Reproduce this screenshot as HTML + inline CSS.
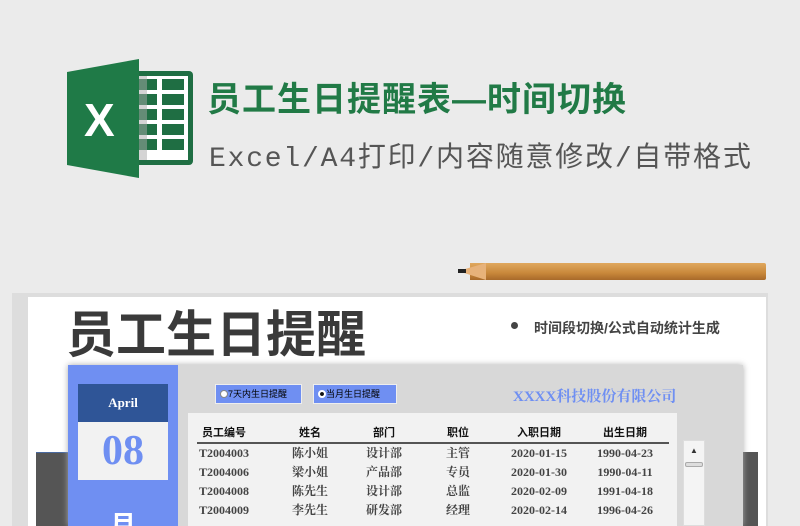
<!DOCTYPE html><html><head><meta charset="utf-8"><style>
*{margin:0;padding:0;box-sizing:border-box}
html,body{width:800px;height:526px;overflow:hidden}
body{background:#ebebeb;position:relative;font-family:"Liberation Sans","Noto Sans CJK SC",sans-serif}
.a{position:absolute}
.r{position:absolute;left:0;width:800px;height:19px}
.r span{position:absolute;width:90px;text-align:center;white-space:nowrap}
.d{font-size:12px;color:#444;font-family:"Liberation Serif","Noto Serif CJK SC",serif;font-weight:bold;line-height:19px}
.h{font-size:11px;color:#111;font-weight:bold;line-height:19px}
.c1{left:179px}.c2{left:265px}.c3{left:339px}.c4{left:413px}.c5{left:494px}.c6{left:580px}
</style></head><body>
<svg class="a" style="left:60px;top:55px" width="140" height="130" viewBox="60 55 140 130">
<rect x="130" y="71" width="63" height="94" rx="4" fill="#1f6e43"/>
<rect x="135" y="76" width="53" height="84" fill="#fff"/>
<g fill="#1f6e43"><rect x="139" y="79" width="18" height="11"/><rect x="162" y="79" width="22" height="11"/><rect x="139" y="94" width="18" height="11"/><rect x="162" y="94" width="22" height="11"/><rect x="139" y="109" width="18" height="11"/><rect x="162" y="109" width="22" height="11"/><rect x="139" y="124" width="18" height="11"/><rect x="162" y="124" width="22" height="11"/><rect x="139" y="139" width="18" height="11"/><rect x="162" y="139" width="22" height="11"/></g>
<rect x="139" y="76" width="8" height="84" fill="#aaa" opacity=".5"/>
<polygon points="67,72 139,59 139,178 67,165" fill="#1f7a47"/>
<text x="84" y="136" font-family="Liberation Sans" font-weight="bold" font-size="46" fill="#fff">X</text>
</svg>
<div class="a" style="left:207px;top:72px;font-size:34px;font-weight:bold;color:#217a46;letter-spacing:1px">员工生日提醒表—时间切换</div>
<div class="a" style="left:209px;top:135px;font-size:28px;color:#555;letter-spacing:1.8px;font-family:'Liberation Mono','Noto Sans CJK SC',monospace">Excel/A4打印/内容随意修改/自带格式</div>
<div class="a" style="left:470px;top:263px;width:296px;height:17px;background:linear-gradient(#e0a85e,#c8873a 60%,#a86a2a);border-radius:0 2px 2px 0"></div>
<div class="a" style="left:458px;top:263px;width:0;height:0;border-top:8px solid transparent;border-bottom:9px solid transparent;border-right:28px solid #e7b27a"></div>
<div class="a" style="left:458px;top:269px;width:8px;height:4px;background:#222"></div>
<div class="a" style="left:12px;top:293px;width:756px;height:233px;background:#ddd"></div>
<div class="a" style="left:28px;top:297px;width:738px;height:229px;background:#fff"></div>
<div class="a" style="left:66px;top:295px;font-size:50px;font-weight:bold;color:#3a3a3a">员工生日提醒</div>
<div class="a" style="left:511px;top:322px;width:7px;height:7px;border-radius:50%;background:#444"></div>
<div class="a" style="left:534px;top:318px;font-size:14px;font-weight:bold;color:#444">时间段切换/公式自动统计生成</div>
<div class="a" style="left:36px;top:452px;width:34px;height:74px;background:#555;border-top:1px solid #4a6aa0"></div>
<div class="a" style="left:740px;top:452px;width:18px;height:74px;background:#555"></div>
<div class="a" style="left:68px;top:365px;width:675px;height:161px;background:#d8d8d8;box-shadow:0 0 6px #aaa"></div>
<div class="a" style="left:68px;top:365px;width:110px;height:161px;background:#6f8ff2;overflow:hidden"><div style="position:absolute;left:42px;top:140px;color:#fff;font-size:26px;font-weight:bold">月</div></div>
<div class="a" style="left:78px;top:384px;width:90px;height:38px;background:#2f5597;color:#fff;font:bold 13px 'Liberation Serif',serif;text-align:center;line-height:38px">April</div>
<div class="a" style="left:78px;top:422px;width:90px;height:58px;background:#f2f2f2;color:#6f8ff2;font:bold 42px 'Liberation Serif',serif;text-align:center;line-height:58px">08</div>
<div class="a" style="left:215px;top:384px;width:87px;height:20px;background:#6f8ff2;border:1px solid #eee;font-size:9px;line-height:18px;padding-left:4px"><span style="display:inline-block;width:8px;height:8px;border-radius:50%;background:#fff;border:1px solid #888;vertical-align:-1px"></span>7天内生日提醒</div>
<div class="a" style="left:313px;top:384px;width:84px;height:20px;background:#6f8ff2;border:1px solid #eee;font-size:9px;line-height:18px;padding-left:4px"><span style="display:inline-block;width:8px;height:8px;border-radius:50%;background:#fff;border:2px solid #fff;box-shadow:inset 0 0 0 3px #111;vertical-align:-1px"></span>当月生日提醒</div>
<div class="a" style="left:513px;top:385px;font:bold 15px 'Liberation Serif','Noto Serif CJK SC',serif;color:#6f8ff2">XXXX科技股份有限公司</div>
<div class="a" style="left:188px;top:413px;width:489px;height:113px;background:#f2f2f2"></div>
<div class="r h" style="top:424px"><span class="c1">员工编号</span><span class="c2">姓名</span><span class="c3">部门</span><span class="c4">职位</span><span class="c5">入职日期</span><span class="c6">出生日期</span></div>
<div class="a" style="left:197px;top:442px;width:472px;height:2px;background:#555"></div>
<div class="r d" style="top:444px"><span class="c1">T2004003</span><span class="c2">陈小姐</span><span class="c3">设计部</span><span class="c4">主管</span><span class="c5">2020-01-15</span><span class="c6">1990-04-23</span></div>
<div class="r d" style="top:463px"><span class="c1">T2004006</span><span class="c2">梁小姐</span><span class="c3">产品部</span><span class="c4">专员</span><span class="c5">2020-01-30</span><span class="c6">1990-04-11</span></div>
<div class="r d" style="top:482px"><span class="c1">T2004008</span><span class="c2">陈先生</span><span class="c3">设计部</span><span class="c4">总监</span><span class="c5">2020-02-09</span><span class="c6">1991-04-18</span></div>
<div class="r d" style="top:501px"><span class="c1">T2004009</span><span class="c2">李先生</span><span class="c3">研发部</span><span class="c4">经理</span><span class="c5">2020-02-14</span><span class="c6">1996-04-26</span></div>
<div class="a" style="left:683px;top:440px;width:22px;height:86px;background:#f4f4f4;border:1px solid #ddd"></div>
<div class="a" style="left:690px;top:446px;font-size:8px;color:#333">▲</div>
<div class="a" style="left:685px;top:462px;width:18px;height:5px;background:#ddd;border:1px solid #aaa;border-radius:2px"></div>
</body></html>
